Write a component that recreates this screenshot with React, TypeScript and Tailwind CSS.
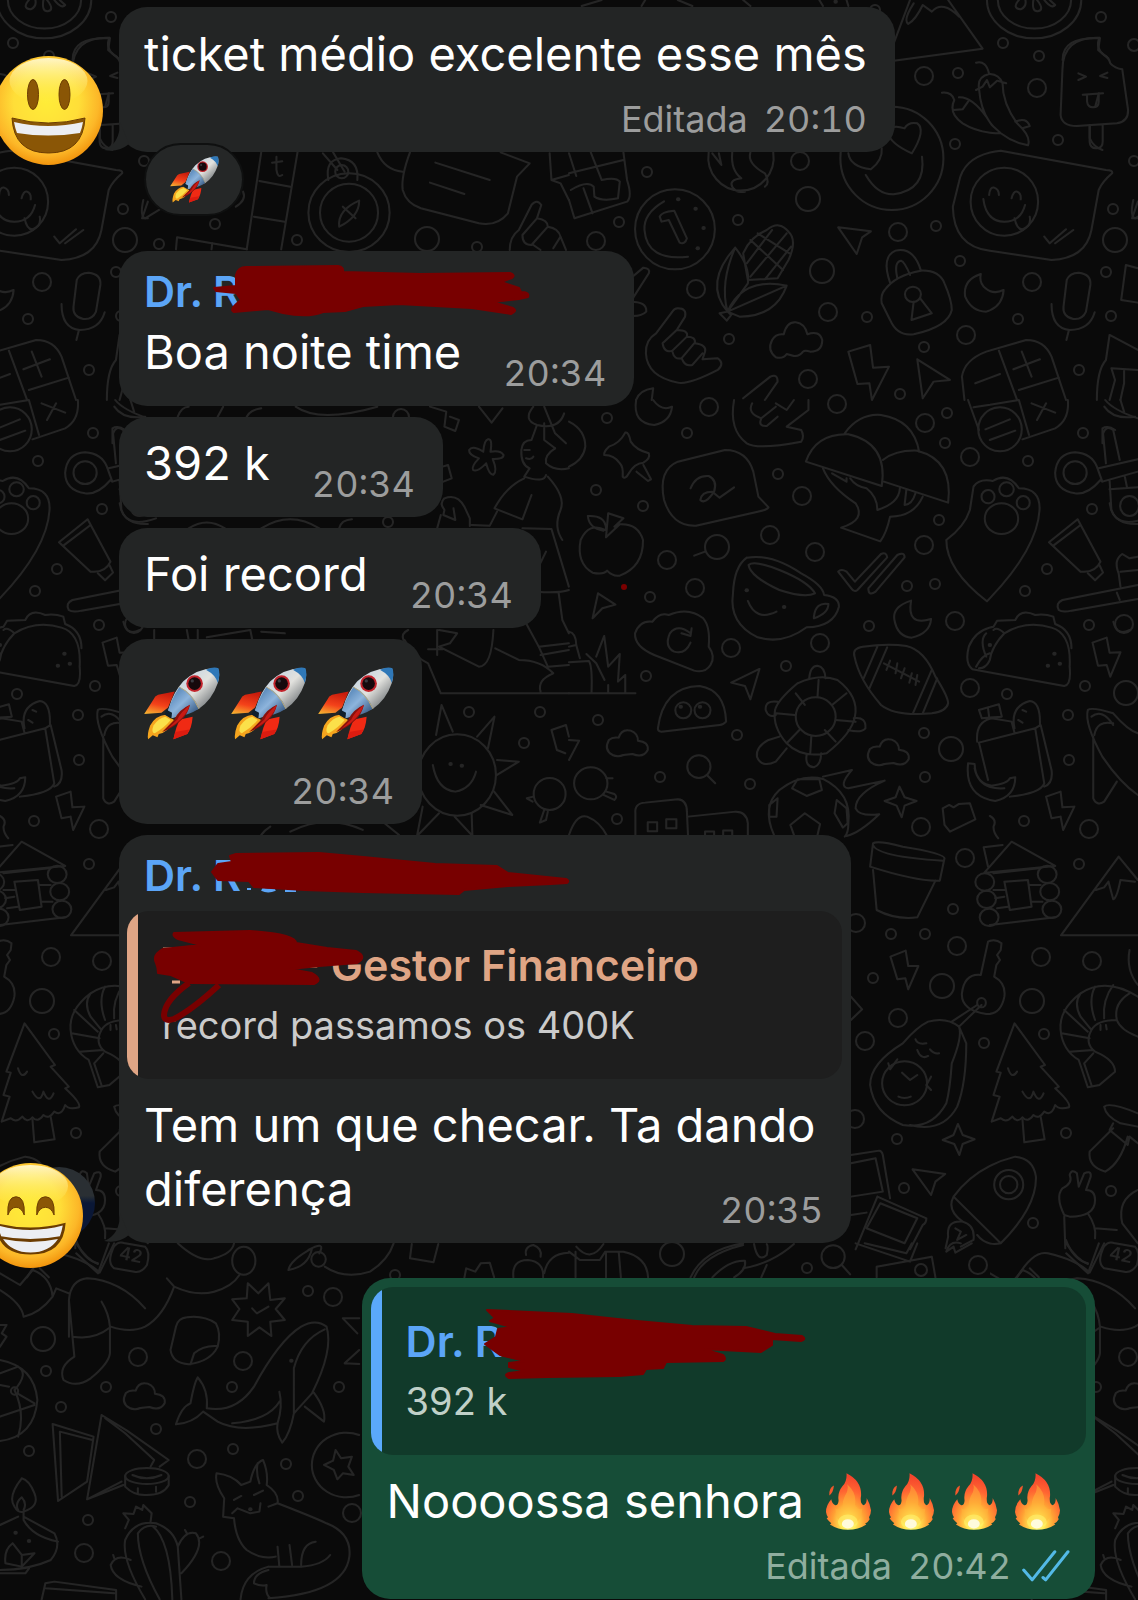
import type { ReactNode } from "react";
import clsx from "clsx";

/* [x, y, radius] of the small rings scattered between the doodles */
const RINGS: [number, number, number][] = [
  [1101, 17, 5], [1003, 43, 5], [1039, 56, 5], [924, 76, 9], [958, 73, 5], [1037, 88, 9],
  [1058, 140, 5], [955, 144, 5], [1134, 161, 5], [1134, 45, 6], [800, 161, 9], [647, 172, 5],
  [619, 222, 5], [596, 241, 9], [738, 220, 5], [808, 199, 12], [898, 232, 9], [936, 226, 5],
  [696, 289, 9], [822, 271, 12], [828, 312, 9], [867, 317, 5], [729, 339, 5], [808, 379, 9],
  [960, 261, 5], [1032, 282, 9], [1018, 319, 5], [966, 335, 9], [924, 347, 5], [900, 394, 5],
  [1079, 370, 5], [1113, 209, 5], [1115, 240, 12], [1106, 272, 5], [1111, 316, 5], [875, 10, 5],
  [159, 244, 5], [215, 224, 5], [297, 240, 5], [427, 239, 12], [477, 247, 5],
  [607, 418, 5], [687, 433, 5], [709, 407, 9], [837, 404, 9], [925, 423, 9], [947, 413, 5],
  [945, 443, 5], [970, 457, 9], [1028, 461, 5], [1083, 433, 5], [596, 490, 5], [643, 506, 5],
  [778, 474, 5], [802, 496, 9], [770, 535, 9], [815, 552, 9], [924, 545, 9], [939, 520, 5],
  [1092, 509, 5], [1047, 569, 5], [1025, 591, 5], [667, 560, 9], [695, 588, 9], [650, 597, 5],
  [907, 586, 5], [935, 584, 5], [869, 626, 5], [955, 621, 9], [1089, 625, 5], [1124, 624, 9],
  [731, 648, 9], [820, 643, 9], [786, 666, 5], [646, 676, 5], [970, 688, 9], [1007, 694, 5],
  [1085, 686, 5], [1126, 693, 12], [598, 720, 5], [737, 735, 5], [924, 733, 5], [951, 749, 12],
  [1068, 715, 5], [1069, 760, 5], [660, 777, 5], [750, 784, 5], [925, 777, 5], [617, 819, 5],
  [921, 827, 9], [1024, 821, 5], [1089, 829, 9], [717, 547, 12],
  [401, 417, 8], [388, 522, 5], [469, 712, 5], [540, 712, 5], [524, 743, 5],
  [965, 858, 9], [1079, 864, 5], [953, 909, 5], [856, 923, 9], [891, 934, 5], [925, 934, 5],
  [957, 946, 9], [873, 978, 5], [1041, 957, 9], [1092, 961, 9], [942, 986, 12], [1032, 1001, 12],
  [898, 1018, 9], [865, 1041, 9], [1044, 1034, 5], [984, 1043, 5], [855, 1119, 9], [897, 1139, 5],
  [1066, 1133, 5], [904, 1188, 5], [1033, 1223, 5], [1111, 1191, 5],
  [308, 1291, 5], [333, 1297, 9], [43, 1339, 12], [138, 1357, 9], [243, 1361, 9], [46, 1371, 5],
  [106, 1387, 5], [232, 1387, 5], [339, 1387, 5], [61, 1407, 5], [156, 1429, 5], [29, 1451, 5],
  [233, 1449, 5], [197, 1459, 9], [286, 1464, 5], [190, 1502, 5], [298, 1496, 5], [352, 1513, 9],
  [88, 1520, 5], [84, 1553, 9], [221, 1561, 9], [395, 1275, 5],
  [672, 1254, 12], [807, 1268, 5], [921, 1270, 6], [978, 1265, 9],
];

const CLOUD =
  "M120 1065Q95 1050 110 1020Q120 1010 137 1013Q145 985 170 992Q190 1000 190 1022Q220 1025 217 1050Q205 1075 175 1062L150 1065Q135 1072 120 1065";

/* The wallpaper art is drawn in blocks, each with its own origin */
type Block = { at: string; paths: string[]; ovals: [number, number, number, number][]; dots?: [number, number][] };

const BLOCKS: Block[] = [
  {
    at: "translate(0 0) scale(.3628 .3333)",
    paths: [
      "M720 457L680 748M820 457L775 748M715 543L800 560M700 650L785 665M762 470V510Q765 535 778 525M750 488L778 484",
      "M905 540Q895 480 940 475Q990 480 985 540M890 460L930 510M918 457L950 515M935 680Q930 630 990 602Q990 650 935 680M945 620L980 655",
      "M1130 457Q1105 530 1110 570Q1120 610 1160 625L1320 670Q1370 680 1400 640L1425 530L1460 490L1380 457M1200 488L1350 540M1185 548L1280 582M1040 457Q1060 510 1110 515",
      "M1405 750Q1405 710 1430 690L1465 615Q1480 595 1492 615L1480 655L1440 705M1480 655Q1510 660 1510 680Q1540 685 1545 710L1560 750M1440 705Q1440 735 1465 735L1510 680M1470 735L1490 750M1545 710L1525 745",
      "M485 748L488 712L680 748M585 730L583 748M670 575Q680 600 650 620M445 625L400 655Q385 650 395 600",
      "M300 115Q200 110 200 180M303 115L298 150L325 175M300 280L290 320M275 375V415Q285 440 310 450",
      "M1515 460L1520 540L1545 550L1568 600M1520 540L1568 525",
    ],
    ovals: [[962, 638, 112, 118], [962, 638, 80, 87], [942, 515, 18, 20]],
  },
  {
    at: "translate(569 0) scale(.3628 .3333)",
    paths: [
      "M940 0L895 130M895 182L1140 146L1045 0M950 10Q920 60 935 72Q955 60 975 15L1000 35Q1030 0 1075 50",
      "M1152 0A130 115 0 0 0 1412 0M1182 0A100 85 0 0 0 1384 0M1240 0Q1220 25 1245 28Q1262 20 1258 0M1280 0Q1275 35 1292 34Q1312 30 1290 0M1310 0Q1330 28 1340 15L1325 0",
      "M1462 113Q1360 110 1360 210L1355 345Q1358 378 1400 378L1510 370Q1542 365 1541 330L1525 208Q1505 205 1492 190Q1488 172 1475 165Q1450 145 1462 113M1435 375V425Q1436 445 1453 445Q1471 445 1471 425V373M1404 220L1425 230L1404 240M1484 218L1464 228L1484 234M1416 284L1472 280M1428 284V305Q1430 322 1444 322Q1460 322 1460 305V283",
      "M1122 188Q1150 180 1158 222Q1125 230 1130 265Q1135 340 1170 380Q1210 425 1265 436Q1275 410 1235 370Q1195 310 1195 250Q1185 222 1158 222M1122 270L1140 260L1152 240L1160 262L1180 242L1205 250M1028 278Q1055 275 1062 300Q1045 340 1085 370Q1130 400 1190 400M1075 292Q1110 290 1150 350M1060 330L1085 328L1100 305M1230 365Q1260 350 1270 378L1250 385",
      "M945 460Q885 430 880 400Q885 370 925 385Q935 365 960 370Q985 390 945 460M770 460Q775 500 832 508Q865 480 862 445M818 525Q850 585 895 583Q985 570 973 470",
      "M1190 452Q1090 465 1075 545L1058 620Q1060 740 1160 752L1330 780Q1425 775 1440 690L1460 570Q1470 545 1497 520Q1500 510 1480 510L1190 452M1158 585Q1160 560 1172 563Q1185 568 1185 585M1220 595Q1225 572 1235 575Q1247 580 1245 598M1142 597Q1150 665 1200 665Q1245 665 1257 615M1228 655Q1235 690 1250 688Q1275 680 1270 650M1310 710L1325 730L1370 688M1340 730L1390 690",
      "M262 604Q205 640 208 690Q215 785 328 770M250 650Q255 635 290 632L325 715Q320 735 305 728L275 660L255 665Z",
      "M437 935Q370 850 458 743Q500 800 493 850L437 935Q415 850 458 743M437 935Q480 830 600 857Q570 950 470 950L437 935L600 857M415 940L437 935L447 945L435 962ZM480 760Q500 710 545 690Q580 660 605 695Q630 720 605 780L575 835M480 760L493 840L575 835M500 720L590 810M520 700L608 760M490 790L560 690M500 830L600 700M540 838L612 740",
      "M742 682L832 694L808 712L793 762Z",
      "M870 870Q900 825 970 812Q1020 810 1035 850Q1055 900 1055 930Q1045 980 950 1003Q905 1010 885 960L862 910Q858 885 870 870M885 848Q860 770 900 752Q950 740 970 812M905 835Q895 785 915 782Q925 785 940 825M950 905L944 960L1000 940L968 895",
      "M1135 822Q1085 840 1092 890Q1110 935 1150 935Q1195 920 1198 870Q1170 885 1148 865Q1130 850 1135 822",
      "M1372 840Q1380 818 1405 818Q1440 822 1437 855L1425 935Q1415 960 1390 957Q1360 950 1363 920ZM1330 912Q1330 985 1380 990Q1435 990 1449 937M1378 990L1371 1020",
      "M300 925Q325 925 320 950L297 990Q330 990 325 1010Q350 1010 347 1030Q380 1035 375 1055L368 1078L410 1075Q430 1090 410 1110Q330 1155 300 1148Q215 1130 212 1060Q210 1020 240 1000L285 935Q290 925 300 925M297 990L258 1030Q262 1060 285 1052L325 1010M285 1055Q290 1080 310 1075L345 1030M312 1078Q320 1100 340 1095L368 1060",
      "M170 835L205 803Q225 805 220 820L170 905Q215 905 213 935Q200 950 170 948",
      "M570 1072Q545 1050 560 1020Q570 1000 592 1003Q600 965 625 967Q650 970 657 1003Q690 990 698 1020Q698 1055 665 1055Q650 1050 645 1055Q635 1070 620 1068L600 1062Q590 1078 570 1072",
      "M770 1055L830 1035L838 1103L882 1100L835 1200L828 1150L795 1152ZM960 1078L1050 1140L1005 1145L975 1195Z",
      "M1090 1200L1083 1130Q1090 1080 1150 1055L1260 1020Q1310 1020 1330 1070L1370 1200M1185 1052L1235 1200M1120 1150L1188 1122M1225 1108L1298 1078M1248 1055L1275 1130M1240 1170L1350 1133",
      "M1455 1200Q1455 1110 1480 1080L1490 1005L1568 1050M1568 1110L1495 1105L1505 1140L1490 1200M1530 1110V1150L1520 1200M1568 805L1535 795L1522 900L1568 908M1568 605L1552 655H1568",
      "M0 520L150 480M0 460L20 528M60 457L90 540M150 457L160 540Q175 590 160 605L15 655L0 600M5 570Q50 540 68 560L70 590Q90 605 135 595L140 545Q130 530 90 540M40 565L65 640",
      "M385 457A90 100 0 1 0 563 457M395 460L420 495L413 460M450 457Q445 510 475 535Q440 540 450 560Q460 580 485 575M500 457Q490 490 540 520Q555 550 540 560",
      "M480 1195Q520 1160 555 1130Q575 1120 575 1145L540 1200M185 1200Q195 1170 232 1165L228 1200M35 18L90 0M200 18L210 0M300 0L340 18M480 0L500 18M700 18L690 0M770 18L765 0",
    ],
    ovals: [[890, 475, 142, 155], [1200, 605, 93, 102], [292, 688, 110, 120], [948, 883, 22, 23]],
    dots: [[301, 598], [349, 626], [371, 684], [355, 745], [735, 5]],
  },
  {
    at: "translate(0 400) scale(.3628 .3333)",
    paths: [
      "M1185 20L1230 35L1225 80L1255 93L1265 60L1240 50M1320 20L1355 68L1385 25",
      "M1345 118Q1358 115 1352 155Q1380 150 1388 165Q1388 178 1358 177Q1372 215 1360 224Q1348 225 1340 190Q1315 218 1304 210Q1298 200 1320 175Q1292 165 1293 150Q1302 135 1332 155Q1335 120 1345 118",
      "M1470 20Q1440 60 1480 75Q1540 90 1555 40M1480 75L1465 120Q1440 120 1437 150Q1435 195 1460 205L1445 230Q1500 250 1505 225M1500 70V120L1530 145M1445 150H1460M1450 175Q1465 180 1470 170M1445 235Q1395 260 1363 325L1440 358L1465 285M1510 230Q1560 290 1545 330Q1525 380 1550 420M1300 375L1350 377L1370 335M1295 355L1280 320Q1260 280 1225 295Q1210 310 1225 330L1222 345L1255 360L1250 325M1295 355V378M1205 385L1215 345M1440 385L1520 387L1568 560M1505 455L1480 510M1480 575Q1540 580 1568 570M1450 670L1485 740L1568 730M1490 765L1568 750M1540 580L1550 660L1568 700",
      "M1530 145Q1500 165 1505 190Q1530 215 1568 205M1500 20L1530 100L1560 130",
      "M1112 720Q1105 700 1125 690M1115 720Q1140 770 1180 790L1215 880H1568M1210 690L1260 700L1240 730L1210 740L1320 800Q1355 800 1360 690M1205 690V765M1180 748H1220M1365 745L1430 780Q1490 780 1525 820Q1480 840 1490 875M1485 740L1510 800L1568 795",
      "M1193 1095Q1205 1170 1255 1175Q1300 1165 1312 1115M1202 1005L1217 915L1248 995M1315 1010L1363 950L1345 1045M1370 1080L1430 1085L1370 1125M1362 1175L1412 1245L1325 1215M1300 1240L1302 1305M1253 1250L1300 1305M1210 1240L1152 1305M1165 1220L1150 1305",
      "M1470 1190L1452 1195L1468 1205M1500 1230L1488 1268L1505 1260L1510 1235M1520 990L1560 975L1568 1010M1520 990L1535 1050L1558 1060",
      "M1220 200L1235 195L1245 235L1222 245M520 385Q570 350 620 385M720 385Q800 330 880 385M935 385Q940 360 970 358M330 310Q340 390 430 355M315 20Q340 60 400 50M425 690V720M515 690L520 720M545 690V720M570 712L690 690L695 718M720 695L785 700",
      "M745 1280Q730 1290 720 1305M800 1295Q900 1240 1000 1290M1060 1270L1100 1305M340 665Q350 710 385 690M490 50Q500 20 520 20M600 50L615 20M680 50Q690 30 720 25M815 20Q880 70 1040 20M310 130V85Q325 75 345 90",
    ],
    ovals: [[1260, 1125, 107, 122], [1515, 1182, 44, 48]],
    dots: [[1242, 1092], [1273, 1097]],
  },
  {
    at: "translate(569 400) scale(.3628 .3333)",
    paths: [
      "M185 0Q175 70 235 75Q280 65 284 20Q255 35 232 0M0 65Q45 90 45 140Q40 180 0 200",
      "M155 98Q165 95 170 125Q185 150 220 160Q225 175 205 188Q180 190 165 220Q155 240 148 230Q150 200 140 190Q125 165 97 165Q95 155 110 140Q140 130 155 98M186 215L218 243L226 238L205 195",
      "M430 150Q490 150 508 215L522 290L550 322Q545 330 520 335L350 377Q285 380 262 300Q245 210 300 185ZM335 265Q350 225 385 228Q410 240 400 275Q375 315 362 300Q365 275 395 275L415 293L455 262",
      "M455 0Q440 90 490 130Q520 150 640 125Q650 110 640 90L600 80L660 30V0M505 10Q490 40 530 55L570 20M530 55Q520 80 545 78L575 50M570 10L600 30L620 0",
      "M653 185Q680 100 770 103Q880 130 862 258ZM760 100Q800 40 860 45Q950 60 965 155M865 180Q900 150 960 152Q1060 180 1045 308L868 245M700 205Q720 260 790 310Q820 360 750 383L858 424Q875 400 885 350Q950 350 975 290M775 235Q790 260 820 265Q850 290 850 330Q910 310 912 265M725 220L765 245V235M930 268L925 315Q945 315 955 280",
      "M1115 260Q1130 235 1168 243Q1210 215 1240 265Q1300 265 1297 330Q1290 450 1152 604Q1040 510 1040 420Q1090 380 1105 330Z",
      "M1465 240Q1430 285 1395 280Q1340 270 1340 218Q1345 160 1395 157Q1440 160 1455 200L1470 245ZM1460 205L1568 178M1470 245L1568 215M1480 190L1472 100Q1480 75 1500 90L1518 180M1490 240L1495 330Q1510 375 1568 372M1490 268L1568 262M1532 230L1538 262",
      "M100 390Q55 365 32 420Q20 490 65 518Q95 525 105 512Q120 530 140 527Q205 500 204 420Q190 370 140 373L102 412L108 340L150 355L125 380M95 392Q55 385 52 348Q100 345 102 385M345 467L375 455",
      "M490 473Q560 460 640 520Q700 555 703 585Q745 590 744 620Q730 680 655 682Q590 735 520 712Q440 670 452 580Q455 500 490 473M495 495Q510 480 580 510Q660 545 678 580Q650 595 580 570Q500 530 495 495M675 650Q680 605 715 612Q715 640 675 655ZM493 603Q515 665 572 635",
      "M742 515Q750 505 765 515L788 545L860 462Q875 455 877 472L795 570Q787 578 778 565ZM825 565L905 465Q925 455 925 472L845 575Q825 590 825 565",
      "M1402 358L1323 427L1410 515Q1450 520 1465 485ZM1335 437L1410 375M1430 520L1450 541L1472 518L1462 495",
      "M1568 555L1360 600Q1340 610 1350 630Q1360 638 1385 632L1568 597M1510 578L1518 600M1520 560L1515 520Q1500 480 1525 462L1545 475L1568 470M1520 515L1568 510",
      "M80 580L128 614L92 625L65 655ZM943 602Q890 620 897 660Q905 710 945 713Q995 700 998 657Q930 680 943 602",
      "M230 665Q250 635 275 645Q330 620 370 655Q390 680 385 740Q405 770 390 795Q375 820 345 812L235 765Q180 740 182 700Q195 660 230 665M335 700Q300 670 278 700Q262 740 290 755Q320 765 335 728M310 700L335 708L338 685",
      "M1112 808L1365 858Q1385 855 1380 800Q1385 700 1330 683Q1260 660 1200 700Q1165 740 1160 780Q1150 805 1130 805M1112 808Q1090 790 1102 740Q1120 690 1170 680L1180 662L1230 660Q1245 625 1285 645Q1310 640 1335 650L1340 672Q1385 690 1385 745M1170 690Q1180 680 1200 700M1150 770Q1130 720 1150 700M1160 760Q1140 765 1122 800",
      "M1443 728L1482 713L1490 758L1520 757L1492 830L1482 795L1458 797ZM525 807L447 848L485 858L500 898Z",
      "M245 985Q260 860 360 858Q430 870 433 965Q425 975 415 975L255 995Q245 995 245 985",
      "M630 850Q690 820 740 840Q800 890 788 950Q780 1000 710 1060Q640 1075 600 1030Q560 980 568 930Q575 900 630 850M662 835Q665 797 685 797Q705 800 707 835M575 905Q540 900 542 930Q550 955 570 945M785 955Q820 950 817 985Q805 1000 770 990M600 1045L570 1085Q530 1105 518 1070Q515 1040 550 1020L580 1010M655 1065Q650 1100 675 1102Q695 1095 695 1060M688 840L685 890M765 880L725 915M790 965L735 960M735 1025L705 990M665 1060L668 1008M600 1030L635 990M570 940L622 945M625 880L650 915",
      CLOUD,
      "M380 1125L403 1150M787 770Q780 745 810 740Q880 730 930 738Q980 750 1010 830Q1045 890 1045 910Q1040 935 1000 940Q900 950 860 915Q800 840 787 770M850 740L812 835M877 742L828 865M948 940L1000 810M975 940L1015 835M868 790L965 845M885 782L875 810M905 790L900 820M925 805L915 835M945 820L938 848M960 825L955 855",
      "M1130 1028L1285 985L1310 1150Q1300 1180 1215 1190M1285 985L1300 975L1330 1110Q1335 1150 1310 1160M1130 1028L1155 1140M1125 1025Q1120 965 1165 955L1220 965L1228 998M1130 930L1185 913L1193 950L1138 955ZM1155 925L1158 950M1228 985Q1215 920 1270 903Q1300 905 1298 975M1250 930L1260 935M1238 960L1250 968M1100 1090L1118 1092Q1120 1150 1165 1157Q1210 1150 1215 1135L1230 1132Q1230 1190 1175 1203Q1090 1190 1100 1090M1118 1105Q1130 1170 1200 1165",
      "M1430 930Q1440 920 1500 940Q1540 990 1568 1000M1430 930Q1420 970 1470 1070Q1520 1150 1568 1185M1445 1010V1195Q1455 1220 1475 1205L1510 1145M1440 950Q1470 925 1500 975M1448 1005Q1455 960 1500 970",
      "M565 1305Q530 1220 580 1170Q640 1120 700 1137Q780 1180 770 1270Q770 1300 760 1310M615 1165L630 1138H690L697 1170L655 1188ZM575 1195L552 1215V1250H572ZM738 1200L765 1225L768 1270L755 1283L732 1240ZM685 1305L692 1272L650 1240L610 1275L620 1305M700 1130L780 1110Q740 1160 770 1165L870 1142Q790 1180 790 1225Q800 1250 855 1243Q800 1300 765 1308",
      "M911 1160L925 1192L958 1203L925 1217L917 1252L903 1217L870 1203L900 1192ZM1030 1225L1048 1215L1060 1222L1075 1212L1105 1210L1120 1258L1050 1295L1035 1275ZM1160 1248Q1180 1260 1170 1280Q1170 1300 1183 1315M1315 1190L1355 1175L1360 1222L1393 1220L1362 1290L1355 1250L1330 1255Z",
      "M183 1305V1240Q180 1210 210 1208L300 1198Q325 1200 325 1235L328 1305M328 1250L460 1235Q490 1235 493 1270V1305M217 1267H243V1294H217ZM268 1258H296V1285H268ZM375 1305V1295H400V1305M425 1305V1292H450V1305",
      "M0 880H183M0 787L55 783Q65 800 62 880M98 840L75 790L48 762M75 770L97 708L108 800L140 762L135 845L155 825V880M108 855V880M0 695Q20 700 20 735L0 740M20 735L30 775",
      "M0 1080L28 1022L0 1020M0 1305Q20 1240 50 1250Q85 1265 105 1308M103 1135H120M95 1185L125 1200Q135 1190 125 1182L103 1175",
      "M1100 0L1130 90M1115 22L1240 0L1268 105M1250 118L1340 85Q1380 60 1375 0M1275 10L1340 38M1315 10L1290 60M1148 88L1215 58M1160 120L1230 92M1478 0Q1500 30 1568 55M1520 0L1530 35",
    ],
    ovals: [
      [1155, 290, 18, 20], [1206, 268, 20, 21], [1252, 308, 18, 20], [1192, 356, 46, 46], [1395, 218, 32, 34],
      [1545, 318, 26, 30], [315, 931, 22, 24], [368, 931, 22, 24], [680, 950, 55, 58], [358, 1100, 32, 34],
      [60, 1150, 46, 48], [1188, 88, 60, 66],
    ],
    dots: [[490, 571], [593, 621], [1338, 761], [1353, 791], [1320, 797], [1160, 735], [308, 920], [361, 920]],
  },
  { at: "translate(830 409) scale(.3628 .3333)", paths: [CLOUD], ovals: [] },
  {
    at: "translate(569 830) scale(.3628 .3333)",
    paths: [
      "M838 40Q850 30 920 50Q1035 70 1035 85L1022 152Q960 155 830 110ZM838 45Q850 80 1030 92M838 120L848 240Q900 270 960 262L1010 152",
      "M1145 128L1220 35L1340 108ZM1155 110L1143 52L1195 45M1200 155L1265 150L1275 230L1215 240ZM1170 130L1295 115M1170 180H1200M1270 165H1300M1175 205L1200 200M1275 215H1305M1160 285L1340 262M1180 235L1210 230",
      "M1568 316H1356L1515 80L1568 150M1452 180L1475 172L1487 155L1500 208Q1510 205 1520 150L1560 155",
      "M1155 335Q1175 325 1192 340L1190 360L1180 375L1188 390L1178 405L1172 440Q1205 460 1200 500Q1190 555 1150 552Q1080 540 1083 490Q1090 430 1135 435ZM1125 525L1055 575M1137 525L1075 590",
      "M1075 590Q1040 560 990 575Q960 590 920 640Q830 700 830 765Q840 850 920 885Q1000 900 1040 820Q1050 780 1055 700Q1085 620 1075 590L1095 640Q1095 760 1070 830Q1030 910 940 885M955 628Q960 645 985 640M960 660Q970 690 990 678M995 658Q1005 672 1020 670M880 700L885 718L905 688M985 765L998 740M985 765L998 780M908 800Q925 808 942 800M918 728L940 750L960 735",
      "M1228 580L1312 705L1300 710L1350 770L1340 775Q1385 820 1378 832Q1350 840 1340 825Q1330 860 1310 845Q1295 870 1280 855Q1265 880 1250 862Q1235 880 1222 860Q1205 880 1190 865L1165 875L1187 800L1170 795L1190 728L1178 725ZM1250 870L1255 937L1311 928L1300 860M1210 715Q1220 750 1235 725M1250 785Q1270 825 1280 785Q1295 825 1308 790",
      "M1568 500Q1480 440 1410 490Q1350 540 1355 600Q1360 660 1405 690L1430 772L1462 765L1505 725Q1505 690 1450 665Q1420 640 1440 600Q1455 570 1510 570Q1520 600 1568 620M1410 490Q1390 520 1410 560L1440 600M1450 470Q1430 510 1450 570M1500 465Q1470 510 1475 565M1545 490Q1500 520 1510 570M1365 540L1430 605M1358 610L1435 625M1380 665L1445 660M1445 670L1420 700L1440 765M1465 585V600M1480 585L1482 598",
      "M1475 830Q1490 815 1568 850M1475 830Q1480 860 1520 880L1568 890M1500 895L1435 965Q1430 1010 1478 1025Q1520 1000 1540 920M1500 880L1490 900L1540 945L1545 920L1568 940",
      "M1072 882L1085 915L1118 928L1085 942L1076 975L1062 942L1030 930L1060 915ZM947 1018L1037 1032L1010 1055L998 1095ZM886 380L928 362L935 408L963 408L935 478L927 445L905 448Z",
      "M777 975L855 962Q862 962 865 975L885 1105M777 1000L845 985L865 1085L777 1100M850 1100L985 1165Q985 1180 975 1185L940 1258M850 1100L790 1258M858 1120L960 1165L925 1240L820 1195ZM777 1155L820 1148M777 500L808 538L777 570",
      "M1060 1100Q1120 1010 1230 980Q1280 985 1287 1040Q1290 1130 1190 1240ZM1060 1100Q1040 1140 1085 1175M1190 1240Q1150 1250 1125 1215M1085 1175Q1040 1170 1045 1220L1038 1255M1085 1175Q1120 1185 1115 1230L1080 1250M1065 1195L1080 1205L1070 1230L1095 1215",
      "M1365 1155Q1340 1100 1360 1075Q1390 1060 1380 1035Q1385 1015 1400 1030L1405 1070L1420 1030Q1440 1020 1438 1040L1425 1080Q1450 1080 1450 1110Q1450 1160 1380 1160ZM1365 1160L1368 1255M1430 1150Q1455 1190 1450 1225M1450 1195L1510 1200M1568 1080Q1510 1110 1525 1180L1568 1240M1545 360Q1535 420 1568 465",
    ],
    ovals: [
      [1146, 156, 26, 26], [1151, 208, 26, 26], [1158, 262, 26, 26], [1318, 133, 26, 26], [1325, 185, 26, 26],
      [1331, 238, 26, 26], [1137, 518, 12, 14], [925, 760, 62, 66], [1212, 1064, 40, 44], [1212, 1064, 24, 26],
    ],
  },
  {
    at: "translate(0 1240) scale(.3628 .3333)",
    paths: [
      "M310 30Q320 0 345 10L400 20Q415 35 405 75Q390 100 370 95L315 85Q295 70 310 30",
      "M190 290V180Q195 120 240 115Q330 120 400 205M190 180L205 350Q160 380 175 420Q210 445 250 415Q300 370 303 340V260Q300 220 280 185M200 290Q260 300 300 265M305 260Q360 280 400 260Q450 230 480 140L460 115M480 140Q540 170 590 155Q640 140 660 105M490 10Q550 70 590 55Q640 40 645 10",
      "M0 150Q60 190 65 230M65 230Q110 220 145 170Q140 110 90 90L55 135L0 100M145 170L155 145L190 160M210 10Q240 60 270 72M270 100L300 10M210 40L270 100",
      "M712 160L740 130L745 180L785 175L760 207L785 240L745 245L748 288L715 262L683 288V245L640 240L660 207L640 178L680 175L683 130ZM695 205L708 220L740 200",
      "M485 260Q490 235 515 232Q560 225 595 250Q610 280 600 320Q580 365 520 373Q475 370 470 330ZM600 318Q560 315 535 340L525 373",
      "M570 505Q650 520 700 440Q770 300 830 260Q870 235 900 260Q920 330 860 460L810 520Q800 580 778 608Q760 580 765 550Q660 580 600 545L560 515Q530 550 485 553Q500 500 525 490Q535 430 545 412Q575 450 570 505M895 268Q830 300 810 385V520M770 455Q780 500 765 550M640 550Q740 540 770 485M865 458Q900 510 893 545L840 500",
      "M990 235H945L985 280M950 370L990 330M950 370L990 372",
      "M145 552L258 590L240 725L160 783ZM165 575L170 770M165 575L255 600M280 525L240 778L340 735M280 525L350 572L465 660L440 680M290 535L345 580L425 660L415 680M240 778L335 725M345 708V740Q370 768 405 765Q450 765 465 735V708M365 705Q405 725 445 705M380 745V760M430 740V755",
      "M990 585A95 97 0 1 0 990 765M925 630L940 655L970 650L960 680L975 705L945 700L930 718L920 690L893 675L918 662Z",
      "M615 830L618 775Q590 730 597 700Q640 705 665 735L690 725Q700 670 725 660Q740 700 735 735Q770 760 765 790L740 800M615 830L645 835M765 790Q860 830 900 850Q970 880 963 950Q950 1060 740 1075M645 835Q650 900 680 930Q720 960 760 950M765 920L770 980M798 915L805 975M830 975Q830 910 870 905M740 980H830Q890 975 910 945M740 980Q670 1000 663 1078M740 990Q700 1000 700 1030Q720 1040 735 1035Q730 1060 745 1075M640 820L655 805L690 820L715 815L718 790M710 670Q705 700 715 730M700 765L725 752M645 780L665 768",
      "M400 1078Q335 960 345 900Q370 840 430 850Q480 870 490 920L500 1078M430 860Q400 850 380 880Q380 960 440 1078M420 858Q470 900 475 1078M490 920Q510 870 540 880Q570 920 500 1000M360 960Q320 940 305 975Q310 1020 390 1040M345 865L355 840L340 820L368 822L375 800L392 810L395 795L418 820L415 845M515 880L510 870M550 895L560 890M315 955L312 945",
      "M60 715Q20 770 40 800Q50 820 65 815Q110 800 95 760Q80 720 60 715M50 810Q40 790 60 772Q75 790 65 810M65 815V840Q90 890 160 905M65 830L150 880Q170 920 140 960Q80 990 0 990M0 855L50 830M35 910L60 945V980M35 910Q10 930 15 970L60 980L95 940L60 945M0 1000H70L80 985",
      "M115 1078L125 1030L150 1025L320 1050V1078M125 1045L315 1060",
      "M0 360Q95 380 103 480Q95 590 0 603M0 400L50 380M0 435L25 440M50 462L95 490M0 530L95 495M50 380Q80 400 40 450Q70 520 50 590M0 320L18 290L5 280L18 255H0",
      "M795 90Q800 60 860 25Q850 80 795 90M850 30Q900 0 880 40M895 80Q950 120 1020 95Q1070 60 1085 10M1130 55L1135 12M1130 55L1195 67L1208 12M1280 113L1285 85L1310 95L1325 70L1350 68L1362 112M1415 112Q1410 60 1455 60Q1500 65 1497 112M1500 100Q1510 40 1568 38M1450 45Q1445 20 1470 15Q1495 25 1490 50",
    ],
    ovals: [[672, 62, 32, 42], [405, 708, 60, 24], [40, 453, 10, 11], [878, 58, 20, 22]],
    dots: [[803, 362], [690, 808], [43, 878], [80, 903]],
  },
  { at: "translate(86 1053) scale(.3628 .3333)", paths: [CLOUD], ovals: [] },
  {
    at: "translate(569 1240) scale(.3628 .3333)",
    paths: [
      "M20 20Q60 70 95 12M0 35L30 60H85L100 35H150Q215 50 218 112M102 35V112M137 35L143 112M18 35V112M335 112Q370 30 480 10M345 112Q370 45 480 15M395 112Q440 60 485 62Q490 90 455 112M510 12Q520 70 545 45Q550 20 545 12M480 85Q560 70 620 12M530 112L545 75M752 75L775 103",
      "M790 10L940 65L960 10M815 10L930 40L945 10M848 112V80L1000 50L1010 112",
      "M1040 35Q1050 0 1080 10M1040 35L1060 20L1065 38L1110 10M1235 112Q1280 30 1320 40Q1400 60 1435 98L1475 10M1270 85L1295 112M1370 0Q1390 60 1430 70",
    ],
    ovals: [[728, 50, 32, 34]],
  },
];

function Wallpaper() {
  return (
    <svg className="absolute inset-0 h-full w-full" aria-hidden="true">
      <defs>
        <radialGradient id="face" cx="48%" cy="42%" r="60%">
          <stop offset="0" stopColor="#ffec38" />
          <stop offset=".5" stopColor="#ffde38" />
          <stop offset=".8" stopColor="#fcb728" />
          <stop offset="1" stopColor="#f08e08" />
        </radialGradient>
        <linearGradient id="shine" x1="0" y1="0" x2="0" y2="1">
          <stop offset="0" stopColor="#fffbd8" stopOpacity=".9" />
          <stop offset="1" stopColor="#fff04a" stopOpacity="0" />
        </linearGradient>
        <linearGradient id="hull" x1="0" y1="0" x2="1" y2="1">
          <stop offset=".2" stopColor="#c3d3e2" />
          <stop offset=".5" stopColor="#e2e2de" />
          <stop offset=".8" stopColor="#6f7478" />
        </linearGradient>
        <linearGradient id="steel" x1="0" y1="0" x2="1" y2="1">
          <stop offset="0" stopColor="#3a6ea5" />
          <stop offset=".5" stopColor="#8db4dc" />
          <stop offset="1" stopColor="#1c3c66" />
        </linearGradient>
        <linearGradient id="fin" x1=".5" y1="0" x2=".2" y2="1">
          <stop offset="0" stopColor="#c81c0c" />
          <stop offset=".55" stopColor="#f4421a" />
          <stop offset="1" stopColor="#f6b030" />
        </linearGradient>
        <radialGradient id="fire" cx="50%" cy="88%" r="82%">
          <stop offset="0" stopColor="#fffde0" />
          <stop offset=".18" stopColor="#ffee55" />
          <stop offset=".44" stopColor="#ffa034" />
          <stop offset=".7" stopColor="#ff6432" />
          <stop offset="1" stopColor="#f4452c" />
        </radialGradient>
        <g id="doodles" fill="none" stroke="#252525" strokeWidth="2" strokeLinecap="round" strokeLinejoin="round">
          {RINGS.map(([x, y, r]) => (
            <circle key={`${x}-${y}`} cx={x} cy={y} r={r} />
          ))}
          {BLOCKS.map((block) => (
            <g key={block.at} transform={block.at}>
              {block.paths.map((d) => (
                <path key={d} d={d} vectorEffect="non-scaling-stroke" />
              ))}
              {block.ovals.map(([x, y, rx, ry]) => (
                <ellipse key={`${x}-${y}-${rx}`} cx={x} cy={y} rx={rx} ry={ry} vectorEffect="non-scaling-stroke" />
              ))}
              {block.dots?.map(([x, y]) => (
                <circle key={`${x}-${y}`} cx={x} cy={y} r="6" fill="#252525" stroke="none" />
              ))}
            </g>
          ))}
          <text
            x="119"
            y="1261"
            transform="rotate(12 130 1256)"
            fill="#252525"
            stroke="none"
            fontFamily="Inter, sans-serif"
            fontSize="18"
            fontWeight="600"
          >
            42
          </text>
        </g>
        <pattern id="tile" width="990" height="1600" patternUnits="userSpaceOnUse">
          <use href="#doodles" x="-990" />
          <use href="#doodles" />
        </pattern>
      </defs>
      <rect width="100%" height="100%" fill="url(#tile)" />
      <circle cx="624" cy="587" r="3" fill="#7a0000" />
    </svg>
  );
}

function Rocket({ className }: { className: string }) {
  return (
    <svg viewBox="40 52 228 220" className={className} role="img" aria-label="foguete">
      <path d="M105 196L130 212Q112 250 84 254L80 264L66 258L52 270Q48 255 58 228Q75 198 105 196Z" fill="#f5a51e" />
      <path d="M104 202L120 212Q100 236 72 252Q60 250 68 228Q84 206 104 202Z" fill="#fbe04a" />
      <path d="M132 126L82 136Q72 140 68 150L40 194L92 190L112 174Z" fill="url(#fin)" />
      <path d="M186 202L148 210Q136 230 128 270L170 254Q184 235 186 202Z" fill="#f02a14" />
      <path d="M128 270L170 254L176 240L134 248Z" fill="#dc1c10" />
      <path d="M262 56Q205 52 158 95Q128 128 116 172L108 196L122 206Q165 196 205 178Q245 150 262 100Q270 75 262 56Z" fill="url(#hull)" />
      <path d="M146 112Q120 150 108 196L122 206Q175 198 205 178Q188 130 146 112Z" fill="url(#steel)" />
      <path d="M146 112Q184 132 205 178" fill="none" stroke="#b8a878" strokeWidth="3" />
      <path d="M226 60Q250 50 264 56Q270 76 262 100Q256 76 226 60Z" fill="#2f78b8" />
      <circle cx="192" cy="102" r="25" fill="#c2242c" />
      <circle cx="192" cy="102" r="19" fill="#16090c" />
      <circle cx="185" cy="94" r="5" fill="#3a3a40" />
      <path d="M106 180L124 190L122 208L102 196Z" fill="#10202c" />
      <path d="M178 166Q145 180 130 212L94 248Q128 236 152 212Q172 194 178 166Z" fill="#8a100c" />
      <path d="M178 166Q150 188 140 210L110 238Q136 226 154 206Q170 190 178 166Z" fill="#c81a14" />
    </svg>
  );
}

function Flame() {
  return (
    <svg viewBox="42 33 136 171" className="h-[57px] w-[45px]" role="img" aria-label="fogo">
      <path
        d="M104 33Q106 58 92 72Q76 92 80 115Q80 130 70 130Q60 126 58 112Q42 130 42 150Q43 158 48 166L44 170Q52 180 58 184L54 188Q78 204 108 204Q140 204 164 188L160 186Q170 180 174 172L172 166Q178 155 178 145Q175 125 165 108Q166 125 156 130Q144 126 148 100Q150 56 104 33Z"
        fill="url(#fire)"
      />
      <path d="M106 66Q112 84 98 104Q90 122 92 138Q78 146 70 138Q72 184 108 198Q150 186 152 140Q138 146 130 128Q136 92 106 66Z" fill="#ffb63a" opacity=".5" />
      <ellipse cx="108" cy="180" rx="30" ry="22" fill="#fff26a" opacity=".6" />
      <ellipse cx="108" cy="186" rx="18" ry="14" fill="#fffef0" opacity=".85" />
      <path d="M66 70Q50 78 52 100Q64 92 66 70Z" fill="#f4582c" />
    </svg>
  );
}

function GrinOpen() {
  return (
    <svg viewBox="0 0 109 109" className="absolute bottom-[-13px] left-[-6px] size-[109px]" role="img" aria-label="sorriso">
      <circle cx="54.5" cy="54.5" r="54.5" fill="url(#face)" />
      <ellipse cx="54.5" cy="25" rx="39" ry="23" fill="url(#shine)" />
      <g fill="#8a5606" stroke="#6b3c02" strokeWidth="1">
        <ellipse cx="39" cy="38.5" rx="5.5" ry="15" />
        <ellipse cx="70.500" cy="38.5" rx="5.5" ry="15" />
        <path d="M18 62Q54 72 91 62Q89 97 54.500 97Q20 97 18 62Z" />
      </g>
      <path d="M20 66Q54 74 89 66Q88 72 86 77Q54 82 23 77Q21 72 20 66Z" fill="#eceef3" />
    </svg>
  );
}

function GrinSquint() {
  return (
    <>
      <span className="absolute bottom-[4px] left-[23px] size-[72px] rounded-full bg-linear-to-b from-[#2a2f33] from-40% to-[#0a1736] to-50%" />
      <svg viewBox="0 0 109 109" className="absolute bottom-[-25px] left-[-22px] size-[105px]" role="img" aria-label="sorriso">
        <circle cx="54.5" cy="54.5" r="54.5" fill="url(#face)" />
        <ellipse cx="54.5" cy="24" rx="39" ry="22" fill="url(#shine)" />
        <path
          d="M31 54Q30 35 39.500 35Q49 35 48 54Q45 46 39.500 46Q34 46 31 54ZM61 54Q60 35 70 35Q80 35 79 54Q76 46 70 46Q64 46 61 54Z"
          fill="#8a5606"
          stroke="#6b3c02"
          strokeWidth="1"
        />
        <path d="M18 62Q54 72 91 62Q89 95 54.500 95Q20 95 18 62Z" fill="#6b3c02" />
        <path d="M21 65Q54 74 88 65Q87 71 85 76Q54 82 24 76Q22 71 21 65ZM26 79Q54 85 83 79Q74 93 54.500 93Q35 93 26 79Z" fill="#eceef3" />
      </svg>
    </>
  );
}

function Tail() {
  return (
    <svg viewBox="0 0 30 30" className="absolute bottom-0 left-[-17px] size-[30px] fill-[#232525]" aria-hidden="true">
      <path d="M18 0Q18 22 2 28Q16 31 27 22Z" />
    </svg>
  );
}

function Scribble({ box, className, d, children }: { box: string; className: string; d: string; children?: ReactNode }) {
  return (
    <svg viewBox={box} className={clsx("absolute", className)} aria-hidden="true">
      {children}
      <path d={d} fill="#780000" stroke="#780000" strokeWidth="2" strokeLinejoin="round" />
    </svg>
  );
}

function Bubble({ children, className }: { children: ReactNode; className?: string }) {
  return (
    <article className={clsx("relative w-fit rounded-[28px] bg-[#232525] pr-[28px] pb-[11px] pl-[25px]", className)}>
      {children}
    </article>
  );
}

function Quote({ children, className, bar }: { children: ReactNode; className: string; bar: string }) {
  return (
    <blockquote className={clsx("relative mb-[14px] overflow-hidden rounded-[22px] pt-[25px] pb-[23px] pl-[35px]", className)}>
      <span className={clsx("absolute inset-y-0 left-0 w-[11px]", bar)} />
      {children}
    </blockquote>
  );
}

function Sender() {
  return <h2 className="text-[43px] leading-[58px] font-semibold text-[#5ba5f7]">Dr. R</h2>;
}

function Body({ children }: { children: ReactNode }) {
  return <p className="mb-[11px] text-[47px] leading-[64px] text-white">{children}</p>;
}

function Time({ children, edited, className = "text-[#9c9d9d]" }: { children: ReactNode; edited?: boolean; className?: string }) {
  return (
    <p className={clsx("flex shrink-0 justify-end gap-[16px] text-[36px] leading-[44px] tabular-nums", className)}>
      {edited && <span>Editada</span>}
      <time>{children}</time>
    </p>
  );
}

export default function App() {
  return (
    <main className="relative min-h-screen overflow-hidden bg-[#0a0a0a] font-['Inter','Liberation_Sans',sans-serif]">
      <Wallpaper />

      <section className="relative flex flex-col gap-[11px] pt-[7px] pr-[43px] pl-[119px]">
        <div className="relative mb-[88px] w-fit">
          <div className="absolute bottom-0 left-[-119px]">
            <GrinOpen />
          </div>
          <Bubble className="pt-[15px]">
            <Tail />
            <Body>ticket médio excelente esse mês</Body>
            <Time edited>20:10</Time>
          </Bubble>
          <button
            type="button"
            className="absolute top-[136px] left-[25px] flex h-[73px] w-[100px] items-center justify-center rounded-full border-2 border-[#0f1010] bg-[#252727]"
          >
            <Rocket className="h-[47px] w-[49px]" />
          </button>
        </div>

        <Bubble className="pt-[11px]">
          <Sender />
          <div className="flex items-end gap-[42px]">
            <Body>Boa noite time</Body>
            <Time>20:34</Time>
          </div>
          <Scribble
            box="210 262 322 56"
            className="top-[11px] left-[91px] h-[56px] w-[322px]"
            d="M214 288L236 286L236 275Q238 267 246 267L338 266Q344 267 343 272L420 274L510 273Q516 275 512 278L501 282L519 288L521 292Q530 292 528 297L519 299L492 302L513 308Q518 311 511 314L472 308L399 304L363 306L345 311L323 312Q308 318 283 313L268 309L234 312Q228 310 241 300L236 293L216 291Z"
          />
        </Bubble>

        <Bubble className="pt-[14px]">
          <div className="flex items-end gap-[42px]">
            <Body>392 k</Body>
            <Time>20:34</Time>
          </div>
        </Bubble>

        <Bubble className="pt-[14px]">
          <div className="flex items-end gap-[42px]">
            <Body>Foi record</Body>
            <Time>20:34</Time>
          </div>
        </Bubble>

        <Bubble className="pt-[28px]">
          <div className="mb-[29px] flex gap-[11px]">
            <Rocket className="h-[73px] w-[76px]" />
            <Rocket className="h-[73px] w-[76px]" />
            <Rocket className="h-[73px] w-[76px]" />
          </div>
          <Time>20:34</Time>
        </Bubble>

        <div className="relative max-w-[732px]">
          <div className="absolute bottom-0 left-[-119px]">
            <GrinSquint />
          </div>
          <Bubble className="w-full pt-[11px]">
            <Tail />
            <Sender />
            <Quote className="mt-[7px] mr-[-19px] ml-[-17px] bg-[#1e1e1e]" bar="bg-[#dfa585]">
              <h3 className="pl-[138px] text-[43px] leading-[58px] font-semibold text-[#dfa585]">- Gestor Financeiro</h3>
              <p className="text-[38px] leading-[62px] text-[#cbcbcb]">record passamos os 400K</p>
              <Scribble
                box="150 926 218 100"
                className="top-[15px] left-[23px] h-[100px] w-[218px]"
                d="M174 933L250 931Q296 934 296 943L327 948L356 951Q368 957 357 963L319 966L290 969L312 973Q324 980 314 984L189 983L171 975L158 973Q158 968 156 963Q152 955 163 949L201 945L178 939Q172 936 174 933Z"
              >
                <path d="M163 949H178M172 982H180" stroke="#dfa585" strokeWidth="3" />
                <path d="M189 983Q165 1000 164 1015Q164 1022 174 1019Q192 1010 219 985" fill="none" stroke="#780000" strokeWidth="6" />
              </Scribble>
            </Quote>
            <Body>Tem um que checar. Ta dando diferença</Body>
            {/* the time shares the last line of the text */}
            <div className="mt-[-44px]">
              <Time>20:35</Time>
            </div>
            <Scribble
              box="210 852 360 46"
              className="top-[16px] left-[91px] h-[46px] w-[360px]"
              d="M212 873L218 865L232 863L230 857L236 855L319 854L363 858L435 865L497 867L508 874L566 880Q570 882 567 884L551 885L508 887L464 891L459 895L363 893L305 891L254 888L249 882L218 881Z"
            >
              <path d="M249 889V891M262 890Q268 893 275 890M285 891H296" fill="none" stroke="#5ba5f7" strokeWidth="4" />
            </Scribble>
          </Bubble>
        </div>

        <article className="relative mt-[24px] w-fit self-end rounded-[28px] bg-[#164d37] px-[9px] pt-[9px] pb-[11px]">
          <Quote className="bg-[#113a2a]" bar="bg-[#5aa9fb]">
            <Sender />
            <p className="text-[38px] leading-[62px] text-[#c0d0c8]">392 k</p>
            <Scribble
              box="480 1306 324 74"
              className="top-[19px] left-[112px] h-[74px] w-[324px]"
              d="M484 1310L569 1314L605 1318L634 1321L689 1326L743 1327L772 1334L799 1336Q804 1339 798 1341L769 1339L769 1345L758 1352L700 1349L720 1355Q724 1359 720 1361L663 1362L660 1368L643 1369L640 1374L616 1376L544 1377L506 1378Q500 1375 506 1373L522 1371L506 1367V1363L522 1361L497 1355L482 1344L493 1337L495 1329L508 1327L487 1321L492 1318Z"
            />
          </Quote>
          <div className="flex items-center gap-[22px] pr-[26px] pl-[16px]">
            <Body>Noooossa senhora</Body>
            <span className="mb-[11px] flex gap-[18px]">
              <Flame />
              <Flame />
              <Flame />
              <Flame />
            </span>
          </div>
          <div className="flex items-center justify-end gap-[11px] pr-[16px]">
            <Time edited className="text-[#8fae9f]">
              20:42
            </Time>
            <svg
              viewBox="638 269 142 94"
              className="h-[32px] w-[48px]"
              fill="none"
              stroke="#53b9e6"
              strokeWidth="9"
              strokeLinecap="round"
              strokeLinejoin="round"
              role="img"
              aria-label="lida"
            >
              <path d="M643 328L668 357L735 274M700 350L708 357L774 274" />
            </svg>
          </div>
        </article>
      </section>
    </main>
  );
}
